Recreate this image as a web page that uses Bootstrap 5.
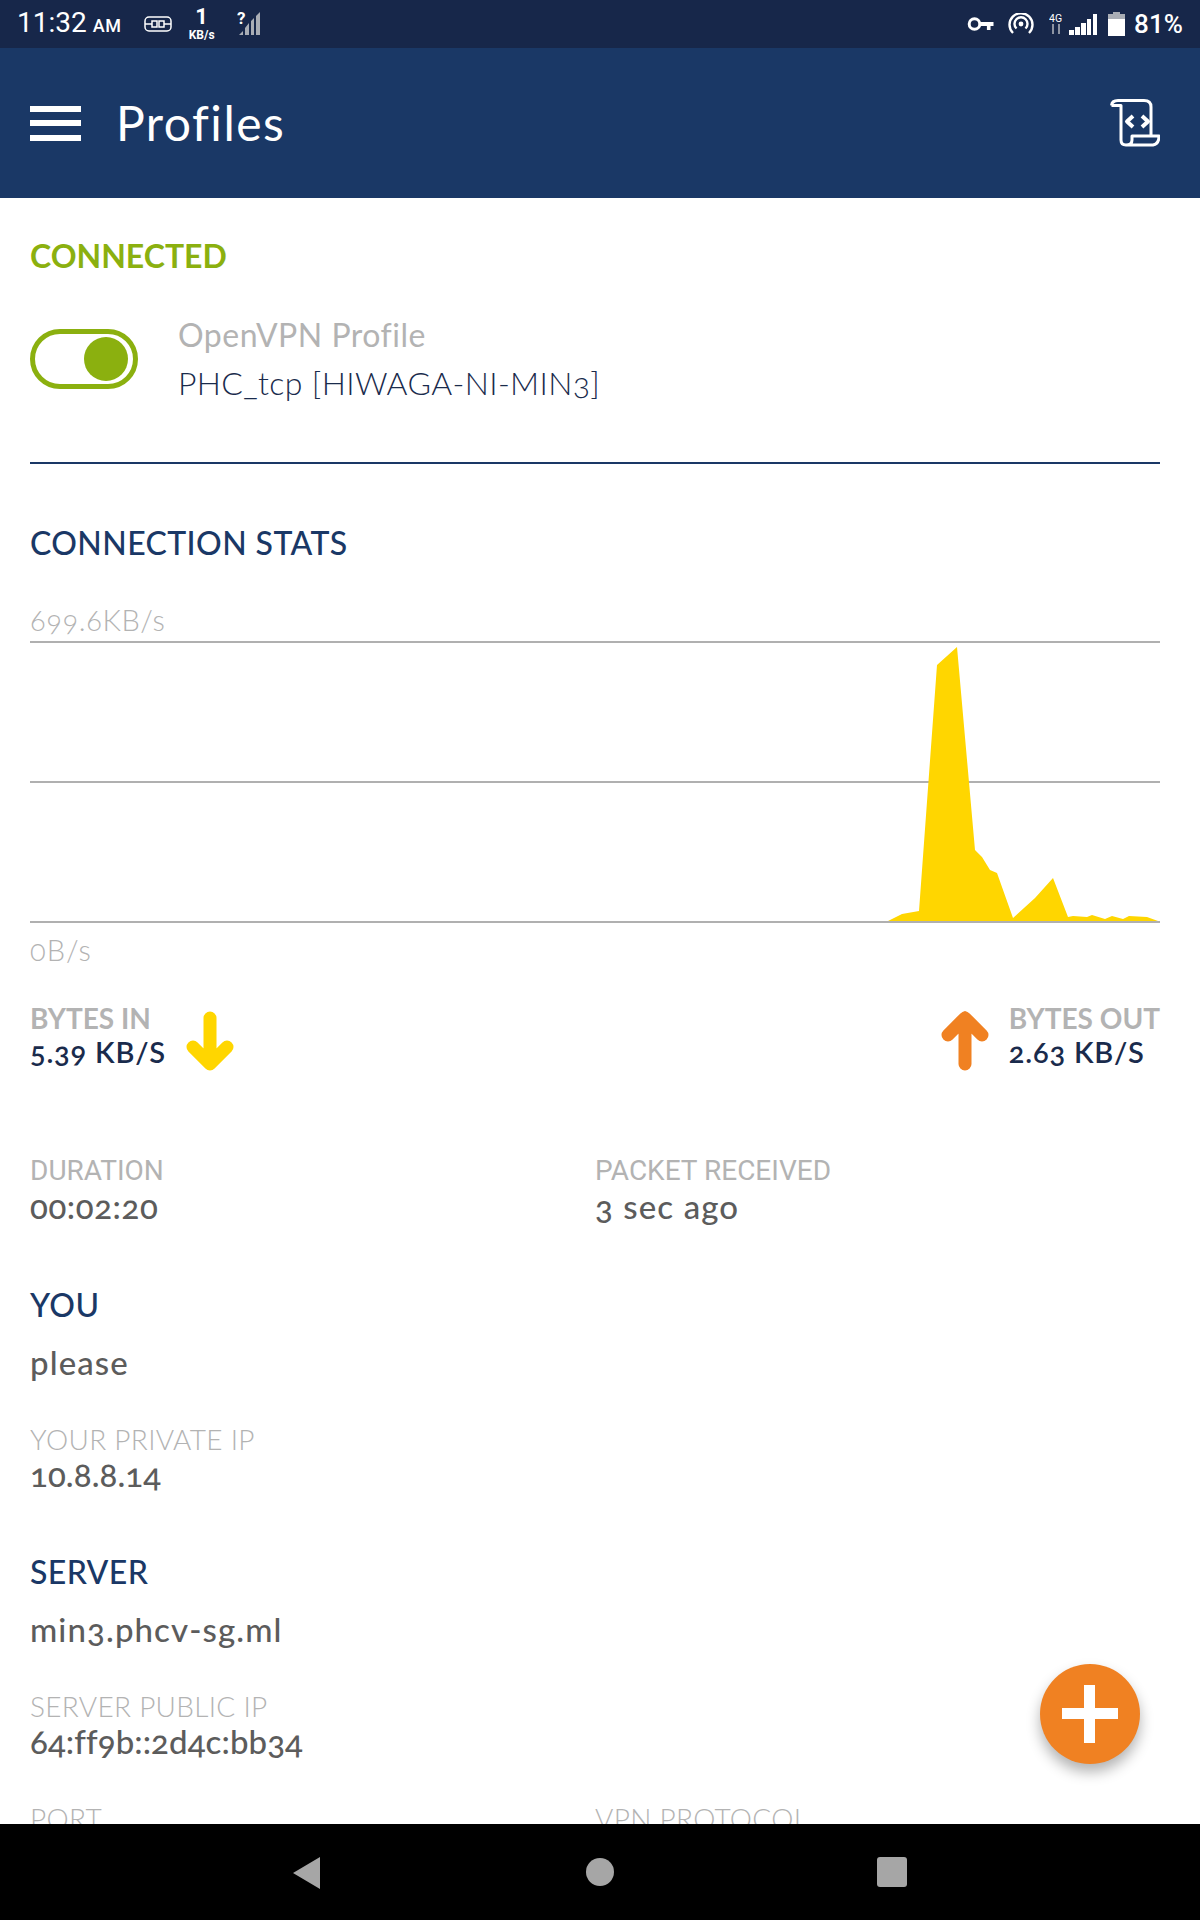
<!DOCTYPE html>
<html lang="en">
<head>
    <meta charset="UTF-8">
    <meta name="viewport" content="width=device-width, initial-scale=1.0">
    <title>Profiles</title>
    <link href="https://cdn.jsdelivr.net/npm/bootstrap@5.3.0/dist/css/bootstrap.min.css" rel="stylesheet">
    <style>
        html, body { margin: 0; background: #fff; }
        .phone { width: 1200px; height: 1920px; font-family: Lato, "Noto Sans", sans-serif; font-variant-numeric: oldstyle-nums; }
        .status-bar { height: 48px; background: #17274a; color: #fff; font-family: Roboto, sans-serif; font-variant-numeric: lining-nums; padding: 0 17px; }
        .status-time { font-size: 28px; line-height: 48px; }
        .status-ampm { font-size: 18px; margin-left: 6px; font-weight: 500; letter-spacing: .6px; }
        .status-plug { margin-left: 22px; }
        .status-speed { width: 34px; margin-left: 13px; text-align: center; font-weight: 700; }
        .speed-num { font-size: 22px; line-height: 22px; }
        .speed-unit { font-size: 12px; line-height: 14px; }
        .status-signal { margin-left: 18px; }
        .status-hotspot { margin-left: 14px; }
        .status-net { margin-left: 15px; }
        .status-bars { margin-left: 5px; }
        .status-batt { margin-left: 10px; }
        .status-pct { font-size: 26px; font-weight: 500; line-height: 48px; margin-left: 9px; }
        .app-header { height: 150px; background: #1a3866; color: #fff; padding: 0 40px 0 30px; }
        .burger { width: 51px; height: 35px; }
        .burger-bar { height: 6px; background: #fff; }
        .app-title { font-size: 48px; margin-left: 35px; line-height: 1; letter-spacing: 1.5px; }
        .page-body { padding: 0 40px 0 30px; overflow: hidden; }
        .state-label { font-size: 32px; font-weight: 700; color: #8bb00f; line-height: 36px; margin-top: 40px; }
        .profile-row { margin-top: 37px; height: 96px; }
        .vpn-toggle { width: 108px; height: 60px; border: 5px solid #8bb00f; border-radius: 30px; padding: 0 5px; }
        .vpn-knob { width: 44px; height: 44px; border-radius: 50%; background: #8bb00f; }
        .profile-text { margin-left: 40px; }
        .profile-kind { font-size: 32px; line-height: 48px; color: #b3b3b3; letter-spacing: .5px; }
        .profile-name { font-size: 32px; line-height: 48px; color: #1a2b4c; font-weight: 300; letter-spacing: .35px; }
        .rule { height: 2px; background: #1a3866; margin-top: 55px; }
        .section-head { font-size: 32px; line-height: 36px; color: #1a3866; font-weight: 500; letter-spacing: .4px; }
        .stats-head { margin-top: 61px; }
        .chart-top { font-size: 29px; line-height: 30px; color: #b3b3b3; font-weight: 300; margin-top: 44px; letter-spacing: .6px; }
        .chart-box { display: block; width: 1130px; height: 282px; margin-top: 6px; }
        .chart-bottom { font-size: 29px; line-height: 30px; color: #b3b3b3; font-weight: 300; margin-top: 12px; letter-spacing: 1px; }
        .bytes-row { margin-top: 35px; height: 70px; }
        .bytes-label { font-size: 28px; line-height: 33px; font-weight: 700; color: #b3b3b3; }
        .bytes-value { font-size: 29px; line-height: 33px; font-weight: 600; color: #1a2b4c; letter-spacing: .8px; }
        .arrow-in { margin: 12px 0 0 20px; }
        .arrow-out { margin: 12px 20px 0 0; }
        .stat-label { font-size: 28px; line-height: 32px; color: #b3b3b3; font-weight: 300; letter-spacing: .3px; }
        .stat-plain { font-family: Roboto, sans-serif; font-weight: 400; letter-spacing: 0; }
        .stat-value { font-size: 33px; line-height: 38px; margin-bottom: 4px; color: #5c5c5c; font-weight: 500; letter-spacing: .6px; }
        .value-wide { letter-spacing: 1.1px; }
        .value-tight { letter-spacing: .1px; }
        .first-stats { margin-top: 85px; }
        .sect-you { margin-top: 58px; }
        .sect-server { margin-top: 61px; }
        .name-line { margin-top: 20px; margin-bottom: 3px; }
        .label-gap { margin-top: 42px; }
        .port-row { margin-top: 42px; }
        .fab { position: absolute; left: 1040px; top: 1664px; width: 100px; height: 100px; border-radius: 50%; background: #f08122; box-shadow: 0 8px 14px rgba(0,0,0,.3); }
        .nav-bar { height: 96px; background: #000; }
        .nav-back { left: 291px; top: 32px; }
        .nav-home { left: 586px; top: 34px; }
        .nav-recent { left: 877px; top: 33px; }
    </style>
</head>
<body>

<div class="phone d-flex flex-column position-relative overflow-hidden">

    <div class="status-bar d-flex align-items-center flex-shrink-0">
        <span class="status-time">11:32<span class="status-ampm">AM</span></span>
        <svg class="status-plug" width="28" height="16" viewBox="0 0 28 16" fill="none" stroke="#fff" stroke-width="1.5"><rect x="1" y="1" width="26" height="14" rx="4"/><path d="M1 8h7M20 8h7M8 5h5v6H8zM15 5h5v6h-5z"/></svg>
        <div class="status-speed">
            <div class="speed-num">1</div>
            <div class="speed-unit">KB/s</div>
        </div>
        <svg class="status-signal" width="24" height="26" viewBox="0 0 24 26"><text x="0" y="13" fill="#fff" font-family="Roboto, sans-serif" font-weight="700" font-size="17">?</text><path d="M2 24l4-4v4zM8 24v-7l4-5v12zM14 24V10l3-3v17zM19 24V5l4-4v23z" fill="#a9adb5"/></svg>

        <div class="ms-auto d-flex align-items-center">
            <svg width="27" height="16" viewBox="0 0 27 16" fill="none" stroke="#fff"><circle cx="7.500" cy="8" r="5.300" stroke-width="3"/><path d="M12 6h14.500v4h-3v4h-3.600v-4H12z" fill="#fff" stroke="none"/></svg>
            <svg class="status-hotspot" width="26" height="22" viewBox="0 0 26 22" fill="none" stroke="#fff" stroke-width="2.4"><path d="M5 20A11.500 11.500 0 1 1 21 20"/><path d="M8.500 15.500A6.500 6.500 0 1 1 17.500 15.500"/><circle cx="13" cy="11" r="2.400" fill="#fff" stroke="none"/></svg>
            <svg class="status-net" width="15" height="24" viewBox="0 0 15 24"><text x="0" y="10" fill="#fff" font-family="Roboto, sans-serif" font-size="10.500">4G</text><path d="M4 12v10M10 12v10" stroke="#8d94a3" stroke-width="2"/></svg>
            <svg class="status-bars" width="29" height="21" viewBox="0 0 29 21" fill="#fff"><rect x="0" y="16" width="5" height="5"/><rect x="6" y="13" width="5" height="8"/><rect x="12" y="9" width="5" height="12"/><rect x="18" y="5" width="4" height="16"/><rect x="24" y="0" width="4" height="21"/></svg>
            <svg class="status-batt" width="17" height="24" viewBox="0 0 17 24"><path d="M5 0h7v2h5v5H0V2h5z" fill="#a9adb5"/><path d="M0 7h17v17H0z" fill="#fff"/></svg>
            <span class="status-pct">81%</span>
        </div>
    </div>

    <div class="app-header d-flex align-items-center flex-shrink-0">
        <div class="burger d-flex flex-column justify-content-between">
            <div class="burger-bar"></div>
            <div class="burger-bar"></div>
            <div class="burger-bar"></div>
        </div>
        <div class="app-title">Profiles</div>
        <svg class="ms-auto" width="50" height="48" viewBox="0 0 50 48" fill="none" stroke="#fff" stroke-width="3" stroke-linejoin="round"><path d="M1.500 6.500Q2 1.500 8 1.500H34Q41 1.500 41 8V36"/><path d="M1.500 6.500H11V41Q11 46 16 46H43Q49 45 49 37H22V41Q22 46 16 46"/><path d="M23 17l-6 5.500 6 5.500M32 17l6 5.500-6 5.500" stroke-width="4"/></svg>
    </div>

    <div class="page-body flex-grow-1">
        <div class="state-label">CONNECTED</div>

        <div class="profile-row d-flex align-items-center">
            <div class="vpn-toggle d-flex align-items-center justify-content-end flex-shrink-0">
                <div class="vpn-knob"></div>
            </div>
            <div class="profile-text">
                <div class="profile-kind">OpenVPN Profile</div>
                <div class="profile-name">PHC_tcp [HIWAGA-NI-MIN3]</div>
            </div>
        </div>

        <div class="rule"></div>

        <div class="section-head stats-head">CONNECTION STATS</div>

        <div class="chart-top">699.6KB/s</div>
        <svg class="chart-box" viewBox="0 0 1130 282">
            <path d="M0 1h1130M0 141h1130M0 281h1130" stroke="#b0b0b0" stroke-width="2"/>
            <path d="M858 280L872 273L889 270L907 24L927 6L945 209L952 216L960 229L967 232L983 277L1005 257L1023 237L1038 276L1043 275L1057 276L1062 274L1075 278L1082 275L1093 278L1099 275L1117 276L1128 280Z" fill="#ffd600"/>
        </svg>
        <div class="chart-bottom">0B/s</div>

        <div class="bytes-row d-flex justify-content-between">
            <div class="d-flex align-items-center">
                <div>
                    <div class="bytes-label">BYTES IN</div>
                    <div class="bytes-value">5.39 KB/S</div>
                </div>
                <svg class="arrow-in" width="48" height="60" viewBox="0 0 48 60" fill="none" stroke="#ffd600" stroke-width="13" stroke-linecap="round" stroke-linejoin="round"><path d="M24 7V53M7 36L24 53L41 36"/></svg>
            </div>
            <div class="d-flex align-items-center">
                <svg class="arrow-out" width="48" height="60" viewBox="0 0 48 60" fill="none" stroke="#f08122" stroke-width="13" stroke-linecap="round" stroke-linejoin="round"><path d="M24 53V7M7 24L24 7L41 24"/></svg>
                <div>
                    <div class="bytes-label">BYTES OUT</div>
                    <div class="bytes-value">2.63 KB/S</div>
                </div>
            </div>
        </div>

        <div class="row g-0 first-stats">
            <div class="col-6">
                <div class="stat-label stat-plain">DURATION</div>
                <div class="stat-value">00:02:20</div>
            </div>
            <div class="col-6">
                <div class="stat-label stat-plain">PACKET RECEIVED</div>
                <div class="stat-value value-wide">3 sec ago</div>
            </div>
        </div>

        <div class="section-head sect-you">YOU</div>
        <div class="stat-value value-wide name-line">please</div>
        <div class="stat-label label-gap">YOUR PRIVATE IP</div>
        <div class="stat-value value-tight">10.8.8.14</div>

        <div class="section-head sect-server">SERVER</div>
        <div class="stat-value value-wide name-line">min3.phcv-sg.ml</div>
        <div class="stat-label label-gap">SERVER PUBLIC IP</div>
        <div class="stat-value value-tight">64:ff9b::2d4c:bb34</div>

        <div class="row g-0 port-row">
            <div class="col-6"><div class="stat-label">PORT</div></div>
            <div class="col-6"><div class="stat-label">VPN PROTOCOL</div></div>
        </div>
    </div>

    <div class="fab d-flex align-items-center justify-content-center">
        <svg width="56" height="58" viewBox="0 0 56 58" fill="#fff"><path d="M22 0h11v23h23v11H33v24H22V34H0V23h22z"/></svg>
    </div>

    <div class="nav-bar flex-shrink-0 position-relative">
        <svg class="position-absolute nav-back" width="30" height="34" viewBox="0 0 30 34"><path d="M29 1V33L2 17Z" fill="#a6a6a6"/></svg>
        <svg class="position-absolute nav-home" width="28" height="28" viewBox="0 0 28 28"><circle cx="14" cy="14" r="14" fill="#a6a6a6"/></svg>
        <svg class="position-absolute nav-recent" width="30" height="30" viewBox="0 0 30 30"><rect width="30" height="30" rx="3" fill="#a6a6a6"/></svg>
    </div>
</div>

<script src="https://cdn.jsdelivr.net/npm/bootstrap@5.3.0/dist/js/bootstrap.bundle.min.js"></script>
</body>
</html>
